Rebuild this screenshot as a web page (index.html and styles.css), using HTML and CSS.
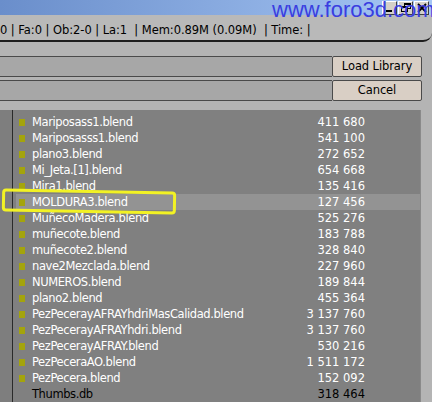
FILE: index.html
```html
<!DOCTYPE html>
<html>
<head>
<meta charset="utf-8">
<link rel="stylesheet" href="styles.css">
</head>
<body>
<div class="screen">
  <div class="titlebar">
    <div class="winbtns">
      <span class="wb"><svg width="12" height="12" viewBox="0 0 12 12"><rect x="2" y="8" width="6" height="2" fill="#000"/></svg></span>
      <span class="wb"><svg width="12" height="12" viewBox="0 0 12 12"><rect x="4.5" y="1.5" width="6" height="5" fill="none" stroke="#000"/><rect x="4" y="1" width="7" height="2" fill="#000"/><rect x="1.5" y="4.5" width="6" height="5" fill="#d4d0c8" stroke="#000"/><rect x="1" y="4" width="7" height="2" fill="#000"/></svg></span>
      <span class="wb"><svg width="12" height="12" viewBox="0 0 12 12"><path d="M2 2 L10 10 M10 2 L2 10" stroke="#000" stroke-width="1.8"/></svg></span>
    </div>
    <div class="watermark">www.foro3d.com</div>
  </div>
  <div class="header">0 | Fa:0 | Ob:2-0 | La:1 &nbsp;| Mem:0.89M (0.09M) &nbsp;| Time: |</div>
  <div class="controls">
    <div class="field"></div>
    <div class="btn">Load Library</div>
    <div class="field"></div>
    <div class="btn">Cancel</div>
  </div>
  <div class="list">
    <div class="gutter"></div>
    <div class="files">
      <div class="row"><i class="ic"></i><span class="name">Mariposass1.blend</span><span class="size">411 680</span></div>
      <div class="row"><i class="ic"></i><span class="name">Mariposasss1.blend</span><span class="size">541 100</span></div>
      <div class="row"><i class="ic"></i><span class="name">plano3.blend</span><span class="size">272 652</span></div>
      <div class="row"><i class="ic"></i><span class="name">Mi_Jeta.[1].blend</span><span class="size">654 668</span></div>
      <div class="row"><i class="ic"></i><span class="name">Mira1.blend</span><span class="size">135 416</span></div>
      <div class="row sel"><i class="ic"></i><span class="name">MOLDURA3.blend</span><span class="size">127 456</span></div>
      <div class="row"><i class="ic"></i><span class="name">MuñecoMadera.blend</span><span class="size">525 276</span></div>
      <div class="row"><i class="ic"></i><span class="name">muñecote.blend</span><span class="size">183 788</span></div>
      <div class="row"><i class="ic"></i><span class="name">muñecote2.blend</span><span class="size">328 840</span></div>
      <div class="row"><i class="ic"></i><span class="name">nave2Mezclada.blend</span><span class="size">227 960</span></div>
      <div class="row"><i class="ic"></i><span class="name">NUMEROS.blend</span><span class="size">189 844</span></div>
      <div class="row"><i class="ic"></i><span class="name">plano2.blend</span><span class="size">455 364</span></div>
      <div class="row"><i class="ic"></i><span class="name">PezPecerayAFRAYhdriMasCalidad.blend</span><span class="size">3 137 760</span></div>
      <div class="row"><i class="ic"></i><span class="name">PezPecerayAFRAYhdri.blend</span><span class="size">3 137 760</span></div>
      <div class="row"><i class="ic"></i><span class="name">PezPecerayAFRAY.blend</span><span class="size">530 216</span></div>
      <div class="row"><i class="ic"></i><span class="name">PezPeceraAO.blend</span><span class="size">1 511 172</span></div>
      <div class="row"><i class="ic"></i><span class="name">PezPecera.blend</span><span class="size">152 092</span></div>
      <div class="row other"><i class="ic none"></i><span class="name">Thumbs.db</span><span class="size">318 464</span></div>
    </div>
    <div class="scroll"></div>
  </div>
  <div class="mark"></div>
</div>
</body>
</html>
```
FILE: styles.css
```css
html, body {
  margin: 0;
  padding: 0;
}
body {
  width: 432px;
  height: 402px;
  overflow: hidden;
  background: #b4b4b4;
  font-family: "DejaVu Sans", sans-serif;
}
.screen {
  position: relative;
  width: 432px;
  height: 402px;
  display: flex;
  flex-direction: column;
  overflow: hidden;
}
.titlebar {
  height: 15px;
  background: linear-gradient(to right, #6a8ecb, #a6c6f4);
  display: flex;
  justify-content: flex-end;
  align-items: flex-start;
  position: relative;
}
.winbtns {
  display: flex;
  gap: 1px;
  padding: 1px 3px 0 0;
}
.wb {
  width: 15px;
  height: 14px;
  background: #d4d0c8;
  border: 1px solid;
  border-color: #fff #404040 #404040 #fff;
  box-sizing: border-box;
  display: flex;
  align-items: center;
  justify-content: center;
}
.watermark {
  position: absolute;
  left: 272px;
  top: -3px;
  font-family: "Liberation Sans", Arial, sans-serif;
  font-size: 22px;
  line-height: 25px;
  color: #3a3ee0;
  white-space: nowrap;
  z-index: 2;
}
.header {
  height: 26px;
  background: #b9b9b9;
  border-bottom: 2px solid #1e1e1e;
  border-bottom-right-radius: 9px;
  font-size: 11.5px;
  letter-spacing: -0.05px;
  line-height: 31px;
  color: #000;
  white-space: nowrap;
  overflow: hidden;
}
.controls {
  display: grid;
  grid-template-columns: 332px 90px;
  grid-auto-rows: 21px;
  row-gap: 3px;
  padding: 14px 10px 9px 0;
}
.field {
  background: #a7a7a7;
  border-top: 1px solid #4a4a4a;
  border-bottom: 1px solid #4a4a4a;
}
.btn {
  background: #d9cfc5;
  border: 1px solid #4a4a4a;
  border-radius: 2px;
  font-size: 11.5px;
  letter-spacing: -0.1px;
  text-align: center;
  line-height: 19px;
  color: #000;
}
.list {
  flex: 1;
  display: flex;
  background: #808080;
}
.gutter {
  width: 12px;
  background: #7e7e7e;
  border-right: 1px solid #2a2a2a;
}
.files {
  flex: 1;
  padding: 4px 0 0 3px;
}
.scroll {
  width: 11px;
  background: #b4b4b4;
  border-left: 1px solid #8a8a8a;
}
.row {
  height: 16px;
  display: flex;
  align-items: center;
  font-size: 11.5px;
  letter-spacing: -0.4px;
  color: #fff;
  white-space: nowrap;
}
.row.sel {
  background: #939393;
}
.row.other {
  color: #000;
}
.ic {
  width: 6px;
  height: 7px;
  background: #a4a40c;
  margin: 0 7px 0 3px;
  flex: none;
}
.ic.none {
  background: transparent;
}
.name {
  flex: 1;
}
.size {
  padding-right: 55px;
  letter-spacing: 0;
}
.mark {
  position: absolute;
  left: 2px;
  top: 190px;
  width: 168px;
  height: 17px;
  border: 3px solid #f2f224;
  border-radius: 4px;
  transform: rotate(1deg);
}
```
